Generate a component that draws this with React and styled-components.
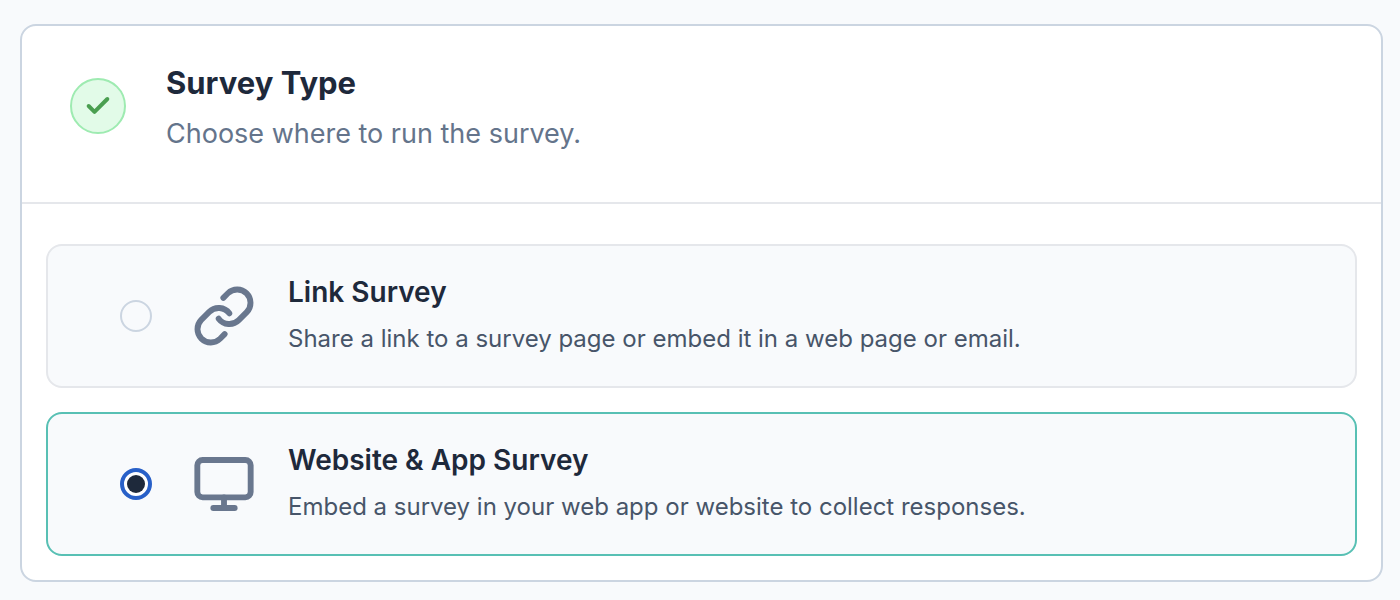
import React, { useState } from "react";
import styled, { createGlobalStyle } from "styled-components";
import { Check, Link, Monitor } from "lucide-react";

const GlobalStyle = createGlobalStyle`
  *, *::before, *::after { box-sizing: border-box; }
  body {
    margin: 0;
    background: #f8fafc;
    color: #1e293b;
    font-family: Inter, "Liberation Sans", sans-serif;
    -webkit-font-smoothing: antialiased;
  }
`;

const Page = styled.main`
  padding: 24px 17px 18px 20px;
`;

const Card = styled.section`
  background: #ffffff;
  border: 2px solid #cbd5e1;
  border-radius: 16px;
`;

const CardHeader = styled.header`
  display: flex;
  align-items: center;
  gap: 40px;
  padding: 31px 48px 47px;
  border-bottom: 2px solid #e5e7eb;
`;

const StatusBadge = styled.span`
  display: flex;
  flex: none;
  align-items: center;
  justify-content: center;
  width: 56px;
  height: 56px;
  border: 2px solid #9eebb1;
  border-radius: 50%;
  background: #e2fbe8;
  color: #4a9f50;
`;

const CardTitle = styled.h1`
  margin: 0 0 4px;
  font-size: 31px;
  font-weight: 650;
  line-height: 52px;
`;

const CardDescription = styled.p`
  margin: 0;
  color: #64748b;
  font-size: 27px;
  line-height: 42px;
`;

const OptionList = styled.div`
  display: flex;
  flex-direction: column;
  gap: 24px;
  padding: 40px 24px 24px;
`;

const Option = styled.label`
  display: flex;
  align-items: center;
  padding: 26px 72px;
  border: 2px solid ${({ $selected }) => ($selected ? "#58c0b4" : "#e5e7eb")};
  border-radius: 16px;
  background: #f8fafc;
  cursor: pointer;
`;

const Radio = styled.input`
  appearance: none;
  display: grid;
  place-items: center;
  flex: none;
  width: 32px;
  height: 32px;
  margin: 0 40px 0 0;
  border: 2px solid #cbd5e1;
  border-radius: 50%;

  &:checked {
    border: 4px solid #2860c8;
    background: #ffffff;
  }

  &:checked::before {
    content: "";
    width: 18px;
    height: 18px;
    border-radius: 50%;
    background: #1e293b;
  }
`;

const OptionIcon = styled.span`
  display: flex;
  flex: none;
  margin-right: 32px;
  color: #69778e;
`;

const OptionText = styled.span`
  display: flex;
  flex-direction: column;
  gap: 6px;
`;

const OptionTitle = styled.span`
  font-size: 28px;
  font-weight: 600;
  line-height: 40px;
`;

const OptionDescription = styled.span`
  color: #475569;
  font-size: 24px;
  line-height: 42px;
`;

const options = [
  {
    id: "link",
    title: "Link Survey",
    description: "Share a link to a survey page or embed it in a web page or email.",
    Icon: Link,
  },
  {
    id: "app",
    title: "Website & App Survey",
    description: "Embed a survey in your web app or website to collect responses.",
    Icon: Monitor,
  },
];

export default function App() {
  const [selected, setSelected] = useState("app");

  return (
    <>
      <GlobalStyle />
      <Page>
        <Card>
          <CardHeader>
            <StatusBadge>
              <Check size={28} strokeWidth={3.4} aria-hidden="true" />
            </StatusBadge>
            <div>
              <CardTitle>Survey Type</CardTitle>
              <CardDescription>Choose where to run the survey.</CardDescription>
            </div>
          </CardHeader>
          <OptionList role="radiogroup" aria-label="Survey Type">
            {options.map(({ id, title, description, Icon }) => (
              <Option key={id} htmlFor={id} $selected={selected === id}>
                <Radio
                  type="radio"
                  name="surveyType"
                  id={id}
                  value={id}
                  checked={selected === id}
                  onChange={() => setSelected(id)}
                />
                <OptionIcon>
                  <Icon size={64} strokeWidth={2.2} aria-hidden="true" />
                </OptionIcon>
                <OptionText>
                  <OptionTitle>{title}</OptionTitle>
                  <OptionDescription>{description}</OptionDescription>
                </OptionText>
              </Option>
            ))}
          </OptionList>
        </Card>
      </Page>
    </>
  );
}
